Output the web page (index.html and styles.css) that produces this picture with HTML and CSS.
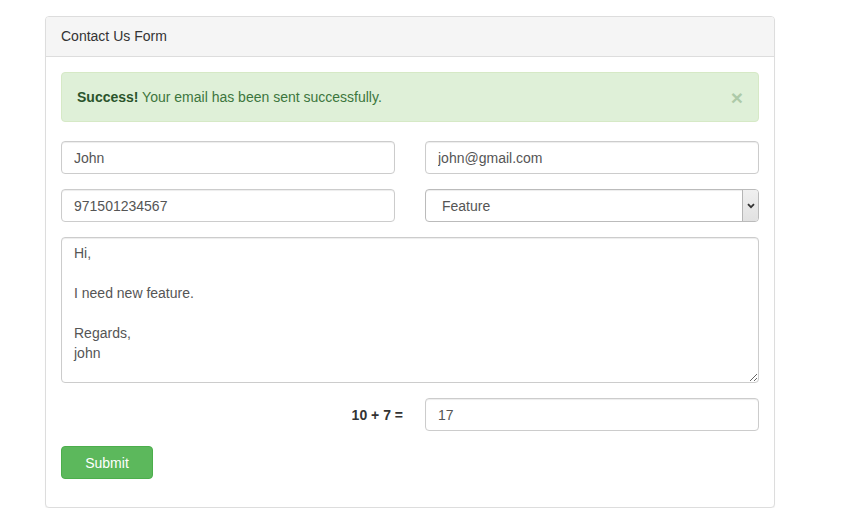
FILE: index.html
```html
<!DOCTYPE html>
<html>
<head>
<meta charset="utf-8">
<link rel="stylesheet" href="styles.css">
</head>
<body>
<div class="page">
  <div class="panel">
    <div class="panel-heading">Contact Us Form</div>
    <div class="panel-body">
      <div class="alert">
        <span><strong>Success!</strong> Your email has been sent successfully.</span>
        <span class="close">&times;</span>
      </div>
      <form class="form">
        <div class="row">
          <input class="control" type="text" value="John">
          <input class="control" type="text" value="john@gmail.com">
        </div>
        <div class="row">
          <input class="control" type="text" value="971501234567">
          <div class="select-wrap">
            <select class="control select"><option>Feature</option></select>
            <span class="select-btn">
              <svg width="8" height="6" viewBox="0 0 8 6"><path d="M1 1.2 L4 4.2 L7 1.2" fill="none" stroke="#333" stroke-width="1.8"/></svg>
            </span>
          </div>
        </div>
        <textarea class="control message">Hi,

I need new feature.

Regards,
john</textarea>
        <div class="row captcha">
          <label class="captcha-label">10 + 7 =</label>
          <input class="control" type="text" value="17">
        </div>
        <div class="actions">
          <button type="button" class="btn">Submit</button>
        </div>
      </form>
    </div>
  </div>
</div>
</body>
</html>
```

FILE: styles.css
```css
* { box-sizing: border-box; }
html, body { margin: 0; background: #fff; }
body {
  font-family: "Liberation Sans", Arial, sans-serif;
  font-size: 14px;
  line-height: 20px;
  color: #333;
}
.page {
  padding: 16px 0 0 45px;
}
.panel {
  width: 730px;
  border: 1px solid #ddd;
  border-radius: 4px;
  background: #fff;
  box-shadow: 0 1px 1px rgba(0,0,0,0.05);
}
.panel-heading {
  background: #f5f5f5;
  border-bottom: 1px solid #ddd;
  border-radius: 3px 3px 0 0;
  padding: 9px 15px 10px;
  color: #333;
}
.panel-body {
  padding: 15px 15px 28px;
}
.alert {
  display: flex;
  justify-content: space-between;
  align-items: center;
  background: #dff0d8;
  border: 1px solid #d6e9c6;
  border-radius: 4px;
  color: #3c763d;
  padding: 14px 15px;
  height: 50px;
  margin-bottom: 19px;
}
.alert strong { font-weight: bold; color: #2b542c; }
.close {
  font-size: 21px;
  font-weight: bold;
  color: #3c763d;
  opacity: 0.3;
  margin-right: 0;
  line-height: 1;
}
.form {
  display: flex;
  flex-direction: column;
  gap: 15px;
}
.row {
  display: grid;
  grid-template-columns: 1fr 1fr;
  column-gap: 30px;
}
.control {
  display: block;
  width: 100%;
  height: 33px;
  padding: 6px 12px;
  font-family: "Liberation Sans", Arial, sans-serif;
  font-size: 14px;
  line-height: 20px;
  color: #555;
  background: #fff;
  border: 1px solid #ccc;
  border-radius: 4px;
  box-shadow: inset 0 1px 1px rgba(0,0,0,0.075);
  margin: 0;
}
.select-wrap {
  position: relative;
}
.select {
  appearance: none;
  -webkit-appearance: none;
  padding-left: 16px;
  border-color: #bbb;
}
.select-btn {
  position: absolute;
  top: 1px;
  right: 1px;
  bottom: 1px;
  width: 16px;
  background: linear-gradient(#f0f0f0, #e1e1e1);
  border-left: 1px solid #b5b5b5;
  border-radius: 0 3px 3px 0;
  display: flex;
  align-items: center;
  justify-content: center;
}
.message {
  height: 146px;
  resize: vertical;
  padding-top: 5px;
}
.captcha { align-items: center; }
.captcha-label {
  text-align: right;
  font-weight: bold;
  color: #333;
  padding-right: 22px;
  margin-right: -30px;
}
.captcha .control { grid-column: 2; }
.actions { display: flex; }
.btn {
  width: 92px;
  height: 33px;
  background: #5cb85c;
  border: 1px solid #4cae4c;
  border-radius: 4px;
  color: #fff;
  font-family: "Liberation Sans", Arial, sans-serif;
  font-size: 14px;
  line-height: 20px;
  padding: 6px 12px;
  cursor: pointer;
}
```
